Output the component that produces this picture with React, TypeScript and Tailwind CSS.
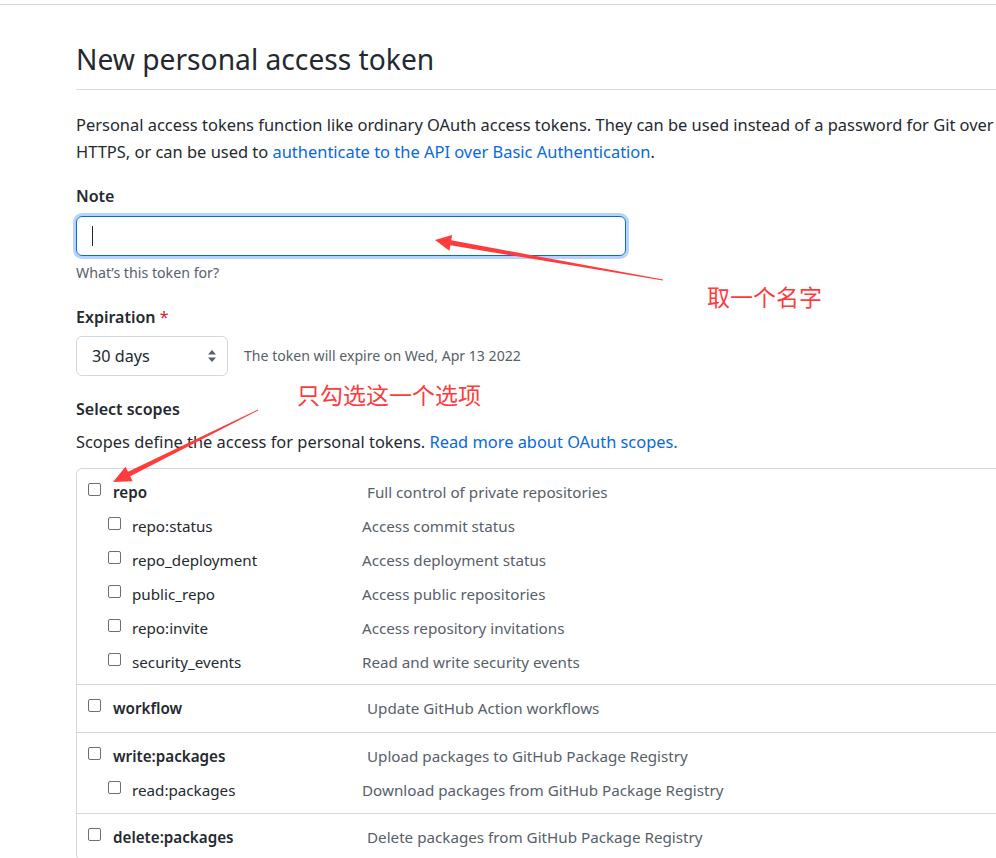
import React from 'react';

const sans = { fontFamily: '"Noto Sans", "Noto Sans CJK SC", sans-serif' };

type Scope = { name: string; desc: string; pb: string; sub?: { name: string; desc: string }[] };

const groups: Scope[] = [
  {
    name: 'repo',
    desc: 'Full control of private repositories',
    pb: 'pb-[5px]',
    sub: [
      { name: 'repo:status', desc: 'Access commit status' },
      { name: 'repo_deployment', desc: 'Access deployment status' },
      { name: 'public_repo', desc: 'Access public repositories' },
      { name: 'repo:invite', desc: 'Access repository invitations' },
      { name: 'security_events', desc: 'Read and write security events' },
    ],
  },
  { name: 'workflow', desc: 'Update GitHub Action workflows', pb: 'pb-[7px]' },
  {
    name: 'write:packages',
    desc: 'Upload packages to GitHub Package Registry',
    pb: 'pb-[6px]',
    sub: [{ name: 'read:packages', desc: 'Download packages from GitHub Package Registry' }],
  },
  { name: 'delete:packages', desc: 'Delete packages from GitHub Package Registry', pb: 'pb-[6px]' },
];

function Box() {
  return <span className="-mt-[5px] block h-[13px] w-[13px] shrink-0 rounded-[2px] border border-[#6e6e6e] bg-white" />;
}

function ScopeGroup({ scope, last }: { scope: Scope; last: boolean }) {
  return (
    <div className={`pt-[7px] ${scope.pb} ${last ? '' : 'border-b border-[#d0d7de]'}`}>
      <div className="flex h-[33px] items-center pl-[11px]">
        <div className="flex w-[279px] items-center gap-[12px]">
          <Box />
          <span className="text-[15.2px] font-semibold text-[#24292f]">{scope.name}</span>
        </div>
        <span className="text-[15.2px] text-[#57606a]">{scope.desc}</span>
      </div>
      {scope.sub?.map((s) => (
        <div key={s.name} className="flex h-[34px] items-center pl-[31px]">
          <div className="flex w-[254px] items-center gap-[11px]">
            <Box />
            <span className="text-[15.2px] text-[#24292f]">{s.name}</span>
          </div>
          <span className="text-[15.2px] text-[#57606a]">{s.desc}</span>
        </div>
      ))}
    </div>
  );
}

export default function App() {
  return (
    <div className="relative h-[858px] w-full overflow-hidden bg-white" style={sans}>
      <div className="mt-[4px] border-t border-[#d0d7de]" />
      <div className="w-[1100px] pl-[76px]">
        <h1 className="mt-[34px] border-b border-[#d8dee4] pb-[10px] text-[28.2px] font-normal leading-[40px] text-[#24292f]">
          New personal access token
        </h1>

        <p className="mt-[21px] text-[16.45px] leading-[27px] text-[#24292f]">
          Personal access tokens function like ordinary OAuth access tokens. They can be used instead of a password for Git over
          <br />
          HTTPS, or can be used to <a className="text-[#0969da]">authenticate to the API over Basic Authentication</a>.
        </p>

        <div className="mt-[19px] text-[16px] font-semibold leading-6 text-[#24292f]">Note</div>
        <div className="mt-[8px] flex h-[40px] w-[550px] items-center rounded-[6px] border border-[#0969da] px-[15px] shadow-[0_0_0_3px_#b6d4f9]">
          <span className="block h-[20px] w-px bg-[#24292f]" />
        </div>
        <div className="mt-[7px] text-[14.2px] leading-5 text-[#57606a]">What’s this token for?</div>

        <div className="mt-[22px] text-[16px] font-semibold leading-6 text-[#24292f]">
          Expiration <span className="font-normal text-[#cf222e]">*</span>
        </div>
        <div className="mt-[7px] flex items-center gap-[16px]">
          <div className="flex h-[40px] w-[152px] items-center justify-between rounded-[6px] border border-[#d0d7de] pl-[15px] pr-[10px] text-[16.2px] text-[#24292f]">
            <span>30 days</span>
            <svg width="10" height="14" viewBox="0 0 10 14">
              <path d="M5 1 L9 5.5 H1 Z" fill="#57606a" />
              <path d="M5 13 L9 8.5 H1 Z" fill="#57606a" />
            </svg>
          </div>
          <span className="text-[14.1px] text-[#57606a]">The token will expire on Wed, Apr 13 2022</span>
        </div>

        <div className="mt-[21px] text-[16px] font-semibold leading-6 text-[#24292f]">Select scopes</div>
        <div className="mt-[9px] text-[16.4px] leading-6 text-[#24292f]">
          Scopes define the access for personal tokens. <a className="text-[#0969da]">Read more about OAuth scopes.</a>
        </div>

        <div className="mt-[14px] rounded-[6px] border border-[#d0d7de]">
          {groups.map((g, i) => (
            <ScopeGroup key={g.name} scope={g} last={i === groups.length - 1} />
          ))}
        </div>
      </div>

      {/* annotation overlay */}
      <svg className="pointer-events-none absolute left-0 top-0" width="996" height="858">
        <polygon
          fill="#ff3b3b"
          points="435,240 452.2,234.9 451.2,240.3 663.05,279.6 662.95,280.4 450.4,245.3 449.4,250.7"
        />
        <polygon
          fill="#ff3b3b"
          points="113,482 125.5,466.8 128,471.8 257.8,409.6 258.2,410.4 130.2,476.2 132.7,481.2"
        />
      </svg>
      <div
        className="absolute left-[707px] top-[281px] text-[23px] leading-[30px] text-[#ff3b3b]"
        style={{ fontFamily: '"Noto Sans CJK SC", sans-serif' }}
      >
        取一个名字
      </div>
      <div
        className="absolute left-[297px] top-[379px] text-[23px] leading-[30px] text-[#ff3b3b]"
        style={{ fontFamily: '"Noto Sans CJK SC", sans-serif' }}
      >
        只勾选这一个选项
      </div>
    </div>
  );
}
